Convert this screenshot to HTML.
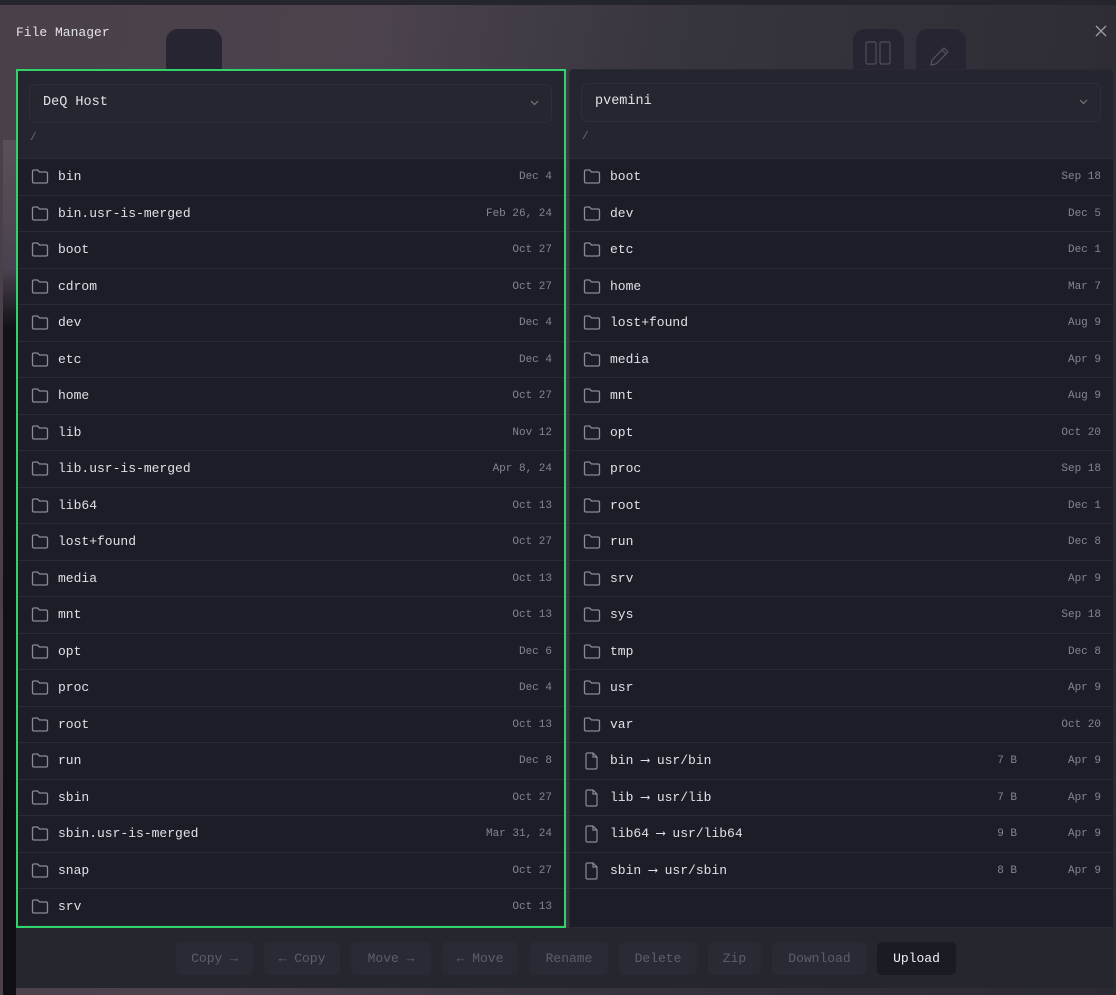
<!DOCTYPE html>
<html><head><meta charset="utf-8"><style>
*{box-sizing:border-box;margin:0;padding:0}
body{width:1116px;height:995px;overflow:hidden;background:#2b2a33;font-family:"Liberation Mono",monospace;position:relative}
.bg{position:absolute;left:0;top:0;width:1116px;height:995px;background:linear-gradient(100deg,#4a4049 0%,#4b424d 30%,#36343d 55%,#2b2a33 100%)}
.strip{position:absolute;left:3px;top:140px;width:13px;height:855px;background:linear-gradient(#5a5058 0%,#4a4250 15%,#121216 22%,#101014 100%)}
.topline{position:absolute;left:0;top:0;width:1116px;height:5px;background:#25252d}
.title{position:absolute;left:16px;top:25px;color:#e4e4e8;font-size:13px}
.close{position:absolute;left:1094px;top:24px}
.tab{position:absolute;top:29px;width:56px;height:50px;border-radius:12px;background:#262531}
.panel{position:absolute;top:69px;height:859px;background:#1d1d28;overflow:hidden}
.left{left:16px;width:550px;border:2px solid #2fd36a}
.right{left:569px;width:545px;border:1px solid #2a2a35;border-radius:4px 4px 0 0}
.head{height:88px;background:#252530;border-bottom:1px solid #2d2d38;position:relative}
.right .head{height:89px}
.sel{position:absolute;left:11px;top:13px;right:12px;height:39px;border:1px solid #2e2e39;border-radius:7px;background:#262631;color:#e2e2e6;font-size:13.5px;padding:10px 0 0 13px}
.sel svg{position:absolute;right:12px;top:15px}
.path{position:absolute;left:12px;top:61px;color:#6c6c78;font-size:11px}
.row{height:36.5px;border-bottom:1px solid #2a2a35;position:relative;color:#e0e0e6;font-size:13px}
.row svg{position:absolute;left:13px;top:10px}
.row .n{position:absolute;left:40px;top:10px}
.row .d{position:absolute;right:12px;top:12px;color:#85858f;font-size:11px}
.row .s{position:absolute;right:96px;top:12px;color:#85858f;font-size:11px}
.foot{position:absolute;left:16px;top:928px;width:1098px;height:60px;background:#26262f}
.btn{position:absolute;top:14px;height:33px;border-radius:5px;background:#2a2a34;color:#5f5e68;font-size:13px;text-align:center;line-height:33px}
</style></head><body>
<div class="bg"></div><div class="topline"></div><div class="strip"></div>
<div class="title">File Manager</div>
<svg class="close" width="14" height="14" viewBox="0 0 14 14"><path d="M2 2L12 12M12 2L2 12" stroke="#9a9aa3" stroke-width="1.4"/></svg>
<div class="tab" style="left:166px"></div>
<div class="tab" style="left:853px;width:51px"><svg width="51" height="40" viewBox="0 0 51 40"><rect x="13" y="13" width="10" height="22" rx="1.5" fill="none" stroke="#4f4f5c" stroke-width="1.2"/><rect x="27" y="13" width="10" height="22" rx="1.5" fill="none" stroke="#4f4f5c" stroke-width="1.2"/></svg></div>
<div class="tab" style="left:916px;width:50px"><svg width="50" height="40" viewBox="0 0 50 40"><path d="M15 36L16 31L28 19L32 23L20 35Z M26 21L30 25" fill="none" stroke="#55555f" stroke-width="1.2"/></svg></div>

<div class="panel left">
<div class="head"><div class="sel">DeQ Host<svg width="9" height="6" viewBox="0 0 9 6"><path d="M1 1L4.5 4.5L8 1" fill="none" stroke="#777" stroke-width="1.2"/></svg></div><div class="path">/</div></div>
<div id="L"></div>
</div>
<div class="panel right">
<div class="head"><div class="sel">pvemini<svg width="9" height="6" viewBox="0 0 9 6"><path d="M1 1L4.5 4.5L8 1" fill="none" stroke="#777" stroke-width="1.2"/></svg></div><div class="path">/</div></div>
<div id="R"></div>
</div>

<div class="foot">
<div class="btn" style="left:160px;width:77px">Copy →</div>
<div class="btn" style="left:248px;width:76px">← Copy</div>
<div class="btn" style="left:335px;width:80px">Move →</div>
<div class="btn" style="left:426px;width:76px">← Move</div>
<div class="btn" style="left:514px;width:78px">Rename</div>
<div class="btn" style="left:603px;width:78px">Delete</div>
<div class="btn" style="left:692px;width:53px">Zip</div>
<div class="btn" style="left:756px;width:95px">Download</div>
<div class="btn" style="left:861px;width:79px;background:#1b1b23;color:#f0f0f4">Upload</div>
</div>

<script>
var fold='<svg width="18" height="15" viewBox="0 0 18 15"><path d="M1.5 2.5Q1.5 1 3 1H6.5L8.5 3H15Q16.5 3 16.5 4.5V12.5Q16.5 14 15 14H3Q1.5 14 1.5 12.5Z" fill="none" stroke="#8a8a94" stroke-width="1.3"/></svg>';
var file='<svg width="18" height="18" viewBox="0 0 18 18" style="top:9px"><path d="M3 2.5Q3 1 4.5 1H10L14 5V15.5Q14 17 12.5 17H4.5Q3 17 3 15.5Z M10 1V5H14" fill="none" stroke="#8a8a94" stroke-width="1.2"/></svg>';
function r(list,id){var h='';list.forEach(function(e){h+='<div class="row">'+(e[2]?file:fold)+'<span class="n">'+e[0]+'</span>'+(e[2]?'<span class="s">'+e[2]+'</span>':'')+'<span class="d">'+e[1]+'</span></div>'});document.getElementById(id).innerHTML=h}
r([["bin","Dec 4"],["bin.usr-is-merged","Feb 26, 24"],["boot","Oct 27"],["cdrom","Oct 27"],["dev","Dec 4"],["etc","Dec 4"],["home","Oct 27"],["lib","Nov 12"],["lib.usr-is-merged","Apr 8, 24"],["lib64","Oct 13"],["lost+found","Oct 27"],["media","Oct 13"],["mnt","Oct 13"],["opt","Dec 6"],["proc","Dec 4"],["root","Oct 13"],["run","Dec 8"],["sbin","Oct 27"],["sbin.usr-is-merged","Mar 31, 24"],["snap","Oct 27"],["srv","Oct 13"]],"L");
r([["boot","Sep 18"],["dev","Dec 5"],["etc","Dec 1"],["home","Mar 7"],["lost+found","Aug 9"],["media","Apr 9"],["mnt","Aug 9"],["opt","Oct 20"],["proc","Sep 18"],["root","Dec 1"],["run","Dec 8"],["srv","Apr 9"],["sys","Sep 18"],["tmp","Dec 8"],["usr","Apr 9"],["var","Oct 20"],["bin ⟶ usr/bin","Apr 9","7 B"],["lib ⟶ usr/lib","Apr 9","7 B"],["lib64 ⟶ usr/lib64","Apr 9","9 B"],["sbin ⟶ usr/sbin","Apr 9","8 B"]],"R");
</script>
</body></html>
